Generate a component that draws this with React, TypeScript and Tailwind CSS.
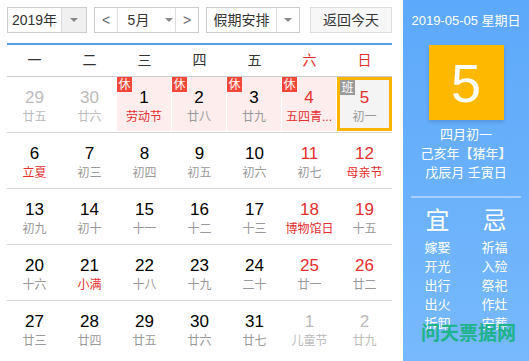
import React from "react";

type Day = {
    n: number;
    lunar: string;
    muted?: boolean;
    red?: boolean;
    fest?: boolean;
    badge?: "休" | "班";
    selected?: boolean;
};

const weekdays = ["一", "二", "三", "四", "五", "六", "日"];

const weeks: Day[][] = [
    [
        { n: 29, lunar: "廿五", muted: true },
        { n: 30, lunar: "廿六", muted: true },
        { n: 1, lunar: "劳动节", fest: true, badge: "休" },
        { n: 2, lunar: "廿八", badge: "休" },
        { n: 3, lunar: "廿九", badge: "休" },
        { n: 4, lunar: "五四青...", red: true, fest: true, badge: "休" },
        { n: 5, lunar: "初一", red: true, badge: "班", selected: true },
    ],
    [
        { n: 6, lunar: "立夏", fest: true },
        { n: 7, lunar: "初三" },
        { n: 8, lunar: "初四" },
        { n: 9, lunar: "初五" },
        { n: 10, lunar: "初六" },
        { n: 11, lunar: "初七", red: true },
        { n: 12, lunar: "母亲节", red: true, fest: true },
    ],
    [
        { n: 13, lunar: "初九" },
        { n: 14, lunar: "初十" },
        { n: 15, lunar: "十一" },
        { n: 16, lunar: "十二" },
        { n: 17, lunar: "十三" },
        { n: 18, lunar: "博物馆日", red: true, fest: true },
        { n: 19, lunar: "十五", red: true },
    ],
    [
        { n: 20, lunar: "十六" },
        { n: 21, lunar: "小满", fest: true },
        { n: 22, lunar: "十八" },
        { n: 23, lunar: "十九" },
        { n: 24, lunar: "二十" },
        { n: 25, lunar: "廿一", red: true },
        { n: 26, lunar: "廿二", red: true },
    ],
    [
        { n: 27, lunar: "廿三" },
        { n: 28, lunar: "廿四" },
        { n: 29, lunar: "廿五" },
        { n: 30, lunar: "廿六" },
        { n: 31, lunar: "廿七" },
        { n: 1, lunar: "儿童节", muted: true },
        { n: 2, lunar: "廿九", muted: true },
    ],
];

const yi = ["嫁娶", "开光", "出行", "出火", "拆卸"];
const ji = ["祈福", "入殓", "祭祀", "作灶", "安葬"];

function Caret() {
    return <span className="w-0 h-0 border-l-[4px] border-r-[4px] border-t-[4px] border-l-transparent border-r-transparent border-t-[#888]" />;
}

function DayCell({ d }: { d: Day }) {
    const numColor = d.muted ? "text-[#bbb]" : d.red ? "text-[#e62e2e]" : "text-black";
    const lunarColor = d.muted ? "text-[#bbb]" : d.fest ? "text-[#e62e2e]" : "text-[#999]";
    let bg = "";
    if (d.selected) bg = "bg-[#f4f4f4] border-[3px] border-[#ffb400] pt-[8px]";
    else if (d.badge === "休") bg = "bg-[#fdeded] border-r border-white pt-[11px]";
    else bg = "pt-[11px]";
    return (
        <div className={`relative flex flex-col items-center h-[54px] mb-px ${bg}`}>
            {d.badge && (
                <span
                    className={`absolute top-0 left-0 w-[15px] h-[15px] flex items-center justify-center text-[12px] leading-none text-white ${
                        d.badge === "休" ? "bg-[#f2483a]" : "bg-[#9a9a9a]"
                    } ${d.selected ? "-top-[3px] -left-[3px]" : ""}`}
                >
                    {d.badge}
                </span>
            )}
            <span className={`text-[17px] leading-[20px] ${numColor}`}>{d.n}</span>
            <span className={`text-[12px] leading-[17px] mt-px whitespace-nowrap ${lunarColor}`}>{d.lunar}</span>
        </div>
    );
}

export default function App() {
    return (
        <div
            className="relative w-[529px] h-[361px] flex bg-white overflow-hidden"
            style={{ fontFamily: '"Liberation Sans", "Noto Sans CJK SC", sans-serif' }}
        >
            {/* Calendar */}
            <div className="w-[392px] pl-[7px] pt-[7px] shrink-0">
                <div className="flex h-[26px] text-[14px] text-[#333]">
                    <div className="flex w-[80px] border border-[#ccc]">
                        <span className="flex-1 flex items-center justify-center">2019年</span>
                        <span className="w-[25px] flex items-center justify-center bg-[#f0f0f0] border-l border-[#ddd]">
                            <Caret />
                        </span>
                    </div>
                    <div className="flex w-[105px] ml-[7px] border border-[#ccc]">
                        <span className="w-[23px] flex items-center justify-center border-r border-[#ddd] text-[#666]">&lt;</span>
                        <span className="flex-1 flex items-center justify-center gap-[16px] pl-[8px]">
                            5月
                            <Caret />
                        </span>
                        <span className="w-[23px] flex items-center justify-center border-l border-[#ddd] text-[#666]">&gt;</span>
                    </div>
                    <div className="flex w-[94px] ml-[7px] border border-[#ccc]">
                        <span className="flex-1 flex items-center justify-center">假期安排</span>
                        <span className="w-[23px] flex items-center justify-center border-l border-[#ddd]">
                            <Caret />
                        </span>
                    </div>
                    <div className="w-[82px] ml-[10px] border border-[#ddd] bg-[#f7f7f7] flex items-center justify-center">返回今天</div>
                </div>

                <div className="mt-[10px] border-t-2 border-[#5a9ee8] grid grid-cols-7 h-[34px] border-b border-b-[#ccc] text-[14px] text-[#333]">
                    {weekdays.map((w, i) => (
                        <span key={w} className={`flex items-center justify-center ${i >= 5 ? "text-[#e62e2e]" : ""}`}>
                            {w}
                        </span>
                    ))}
                </div>

                {weeks.map((week, wi) => (
                    <div key={wi} className={`grid grid-cols-7 ${wi < weeks.length - 1 ? "border-b border-[#d4d4d4]" : ""}`}>
                        {week.map((d, di) => (
                            <DayCell key={di} d={d} />
                        ))}
                    </div>
                ))}
            </div>

            {/* Side panel */}
            <div className="ml-[11px] w-[126px] h-full bg-gradient-to-b from-[#5ca8fa] to-[#77b9fc] text-white flex flex-col items-center">
                <div className="mt-[12px] text-[13px] leading-[17px] whitespace-nowrap">2019-05-05 星期日</div>
                <div className="mt-[16px] w-[75px] h-[75px] bg-[#ffb800] shadow-[0_2px_4px_rgba(0,0,0,0.15)] flex items-center justify-center text-[54px] leading-none">
                    5
                </div>
                <div className="mt-[5px] text-[13px] leading-[19px] flex flex-col items-center whitespace-nowrap">
                    <span>四月初一</span>
                    <span>己亥年【猪年】</span>
                    <span>戊辰月 壬寅日</span>
                </div>
                <div className="mt-[14px] w-[110px] h-[2px] bg-white/40" />
                <div className="grid grid-cols-2 w-[114px] mt-[9px]">
                    <span className="text-center text-[24px] leading-[28px]">宜</span>
                    <span className="text-center text-[24px] leading-[28px]">忌</span>
                    <div className="flex flex-col items-center text-[13px] leading-[19px] mt-[3px]">
                        {yi.map(t => (
                            <span key={t}>{t}</span>
                        ))}
                    </div>
                    <div className="flex flex-col items-center text-[13px] leading-[19px] mt-[3px]">
                        {ji.map(t => (
                            <span key={t}>{t}</span>
                        ))}
                    </div>
                </div>
            </div>

            {/* watermark */}
            <span className="absolute left-[421px] top-[322px] text-[19px] leading-[24px] font-bold text-[#1db38b] tracking-[0px]">问天票据网</span>
        </div>
    );
}
